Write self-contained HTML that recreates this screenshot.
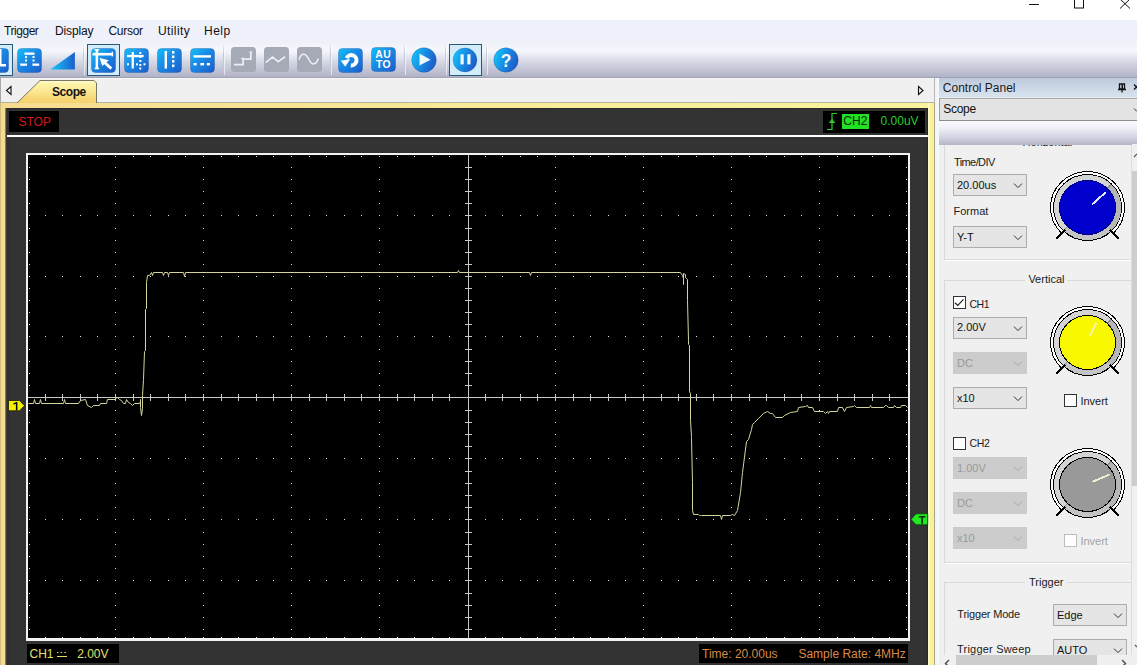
<!DOCTYPE html>
<html><head><meta charset="utf-8"><style>
html,body{margin:0;padding:0;background:#fff;}
#root{position:relative;width:1137px;height:665px;overflow:hidden;background:#f0f0f0;font-family:"Liberation Sans",sans-serif;}
.t{position:absolute;white-space:nowrap;font-family:"Liberation Sans",sans-serif;}
svg{position:absolute;overflow:visible;}
</style></head><body><div id="root">
<div style="position:absolute;left:0px;top:0px;width:1137px;height:20px;background:#ffffff"></div>
<svg style="left:0;top:0" width="1137" height="20"><line x1="1029" y1="4.5" x2="1039" y2="4.5" stroke="#111" stroke-width="1"/><rect x="1074.5" y="-3.5" width="9" height="11.5" fill="none" stroke="#111" stroke-width="1"/><line x1="1120" y1="-1" x2="1130" y2="8.5" stroke="#111" stroke-width="1"/><line x1="1130" y1="-1" x2="1120" y2="8.5" stroke="#111" stroke-width="1"/></svg>
<div style="position:absolute;left:0px;top:20px;width:1137px;height:22px;background:#eef0fa"></div>
<div class="t" style="left:4px;top:25.14px;font-size:12px;line-height:12px;color:#111;font-weight:normal;letter-spacing:-0.45px">Trigger</div>
<div class="t" style="left:55px;top:25.14px;font-size:12px;line-height:12px;color:#111;font-weight:normal;letter-spacing:-0.15px">Display</div>
<div class="t" style="left:108.5px;top:25.14px;font-size:12px;line-height:12px;color:#111;font-weight:normal;letter-spacing:-0.3px">Cursor</div>
<div class="t" style="left:158px;top:25.14px;font-size:12px;line-height:12px;color:#111;font-weight:normal;letter-spacing:0.4px">Utility</div>
<div class="t" style="left:204px;top:25.14px;font-size:12px;line-height:12px;color:#111;font-weight:normal;letter-spacing:0.5px">Help</div>
<div style="position:absolute;left:0px;top:42px;width:1137px;height:36px;background:linear-gradient(to bottom,#eff1f9 0px,#f3f5fb 5px,#f5f6fb 9px,#eceef6 12px,#d2d4e2 21px,#c0c2d3 29px,#b0b2c6 35px)"></div>
<div style="position:absolute;left:0px;top:77px;width:1137px;height:1px;background:#a0a2b2"></div>
<svg width="0" height="0" style="position:absolute">
<defs>
<linearGradient id="gb" x1="0" y1="0" x2="1" y2="1">
<stop offset="0" stop-color="#14c0f8"/><stop offset="0.45" stop-color="#1a8ae6"/><stop offset="1" stop-color="#1c5cc8"/></linearGradient>
<linearGradient id="gc" x1="0" y1="0.3" x2="1" y2="0.7">
<stop offset="0" stop-color="#10c4f8"/><stop offset="0.5" stop-color="#1a86e2"/><stop offset="1" stop-color="#1c58c4"/></linearGradient>
<linearGradient id="gt" x1="0" y1="0" x2="1" y2="0">
<stop offset="0" stop-color="#18c8f8"/><stop offset="1" stop-color="#1a60cc"/></linearGradient>
<linearGradient id="tabg" x1="0" y1="0" x2="0" y2="1">
<stop offset="0" stop-color="#fffbd8"/><stop offset="0.15" stop-color="#fdf3a8"/><stop offset="0.5" stop-color="#fce690"/><stop offset="0.75" stop-color="#f8d878"/><stop offset="1" stop-color="#f6d070"/></linearGradient>
</defs></svg>
<div style="position:absolute;left:-20px;top:44px;width:31px;height:30px;border:1px solid #2a5878;background:#d3ecfa"></div>
<svg style="left:-16px;top:48px" width="25" height="25" viewBox="0 0 25 25"><rect x="0.5" y="0.5" width="24" height="24" rx="4" ry="4" fill="url(#gb)" stroke="#1d4f9e" stroke-opacity="0.35"/><rect x="15" y="1" width="2.5" height="17" fill="#ffffff"/><rect x="15" y="16" width="7" height="2.5" fill="#ffffff"/></svg>
<svg style="left:16.5px;top:47.7px" width="25" height="25" viewBox="0 0 25 25"><rect x="0.5" y="0.5" width="24" height="24" rx="4" ry="4" fill="url(#gb)" stroke="#1d4f9e" stroke-opacity="0.35"/><rect x="7.5" y="4.5" width="10" height="2.3" fill="#ffffff"/><rect x="8" y="8" width="2" height="2" fill="#ffffff"/><rect x="8" y="11.5" width="2" height="2" fill="#ffffff"/><rect x="15.5" y="8" width="2" height="2" fill="#ffffff"/><rect x="15.5" y="11.5" width="2" height="2" fill="#ffffff"/><rect x="3.3" y="15.5" width="6.7" height="2.3" fill="#ffffff"/><rect x="15.4" y="15.5" width="6.8" height="2.3" fill="#ffffff"/></svg>
<svg style="left:50px;top:52px" width="25" height="18" viewBox="0 0 25 18"><polygon points="0.3,17.6 24.9,17.6 24.9,0.1" fill="url(#gt)"/></svg>
<div style="position:absolute;left:83px;top:45px;width:1px;height:30px;background:linear-gradient(to bottom,rgba(190,192,210,0.2),#c4c6d4 30%,#c4c6d4 70%,rgba(190,192,210,0.2))"></div>
<div style="position:absolute;left:84px;top:45px;width:1px;height:30px;background:rgba(255,255,255,0.6)"></div>
<div style="position:absolute;left:87px;top:44px;width:31px;height:30px;border:1px solid #2a5878;background:#d3ecfa"></div>
<svg style="left:91px;top:47.7px" width="25" height="25" viewBox="0 0 25 25"><rect x="0.5" y="0.5" width="24" height="24" rx="4" ry="4" fill="url(#gb)" stroke="#1d4f9e" stroke-opacity="0.35"/><rect x="4.6" y="1.3" width="2.5" height="19.8" fill="#ffffff"/><rect x="3.6" y="1" width="4.5" height="1.5" fill="#ffffff"/><rect x="3.6" y="19.6" width="4.5" height="1.6" fill="#ffffff"/><rect x="1.6" y="4.9" width="20.3" height="2.6" fill="#ffffff"/><rect x="20.6" y="3.8" width="1.5" height="4.6" fill="#ffffff"/><polygon points="8.6,9.9 17.8,12.3 11.3,18.1" fill="#ffffff"/><line x1="13" y1="14" x2="20.3" y2="20.6" stroke="#ffffff" stroke-width="2.8"/></svg>
<svg style="left:123.7px;top:47.9px" width="25" height="25" viewBox="0 0 25 25"><rect x="0.5" y="0.5" width="24" height="24" rx="4" ry="4" fill="url(#gb)" stroke="#1d4f9e" stroke-opacity="0.35"/><rect x="7.6" y="4" width="2.3" height="16.5" fill="#ffffff"/><rect x="3" y="6.9" width="16.6" height="2.3" fill="#ffffff"/><rect x="15.3" y="4" width="2" height="2" fill="#ffffff"/><rect x="15.3" y="8" width="2" height="2" fill="#ffffff"/><rect x="15.3" y="12" width="2" height="2" fill="#ffffff"/><rect x="15.3" y="16" width="2" height="2" fill="#ffffff"/><rect x="15.3" y="19.5" width="2" height="2" fill="#ffffff"/><rect x="3" y="15.3" width="2" height="2" fill="#ffffff"/><rect x="12" y="15.3" width="2" height="2" fill="#ffffff"/><rect x="19.5" y="15.3" width="2" height="2" fill="#ffffff"/></svg>
<svg style="left:157px;top:47.9px" width="25" height="25" viewBox="0 0 25 25"><rect x="0.5" y="0.5" width="24" height="24" rx="4" ry="4" fill="url(#gb)" stroke="#1d4f9e" stroke-opacity="0.35"/><rect x="7.6" y="3" width="2.4" height="17.6" fill="#ffffff"/><rect x="15" y="3" width="2.4" height="2.6" fill="#ffffff"/><rect x="15" y="7.5" width="2.4" height="2.6" fill="#ffffff"/><rect x="15" y="12" width="2.4" height="2.6" fill="#ffffff"/><rect x="15" y="16.5" width="2.4" height="2.6" fill="#ffffff"/></svg>
<svg style="left:189.8px;top:47.9px" width="25" height="25" viewBox="0 0 25 25"><rect x="0.5" y="0.5" width="24" height="24" rx="4" ry="4" fill="url(#gb)" stroke="#1d4f9e" stroke-opacity="0.35"/><rect x="3.5" y="7.2" width="17.5" height="2.4" fill="#ffffff"/><rect x="3.6" y="15" width="3.1" height="2.4" fill="#ffffff"/><rect x="10.4" y="15" width="3.7" height="2.4" fill="#ffffff"/><rect x="16.8" y="15" width="3.1" height="2.4" fill="#ffffff"/></svg>
<div style="position:absolute;left:223px;top:45px;width:1px;height:30px;background:linear-gradient(to bottom,rgba(190,192,210,0.2),#c4c6d4 30%,#c4c6d4 70%,rgba(190,192,210,0.2))"></div>
<div style="position:absolute;left:224px;top:45px;width:1px;height:30px;background:rgba(255,255,255,0.6)"></div>
<svg style="left:231px;top:47.4px" width="25" height="25" viewBox="0 0 25 25"><rect x="0" y="0" width="25" height="25" rx="3.5" ry="3.5" fill="#a6a9b6"/><polyline points="3,17.7 12.1,17.7 12.1,12.1 19.8,12.1 19.8,5" fill="none" stroke="#eceef4" stroke-width="1.8"/><line x1="18.3" y1="5.2" x2="21.3" y2="5.2" stroke="#eceef4" stroke-width="1.4"/><line x1="10" y1="12.1" x2="12.5" y2="10.5" stroke="#eceef4" stroke-width="1.2"/></svg>
<svg style="left:264.2px;top:47.4px" width="25" height="25" viewBox="0 0 25 25"><rect x="0" y="0" width="25" height="25" rx="3.5" ry="3.5" fill="#a6a9b6"/><polyline points="2.2,15.1 8.6,10 14.2,14.7 20.7,10" fill="none" stroke="#eceef4" stroke-width="1.6" stroke-linecap="round"/></svg>
<svg style="left:297.4px;top:47.4px" width="25" height="25" viewBox="0 0 25 25"><rect x="0" y="0" width="25" height="25" rx="3.5" ry="3.5" fill="#a6a9b6"/><path d="M2.2,12.1 C4.5,5.5 8.5,5.8 11.6,12 C14.5,18.5 19,18.5 21.1,12.1" fill="none" stroke="#eceef4" stroke-width="1.6" stroke-linecap="round"/></svg>
<div style="position:absolute;left:330px;top:45px;width:1px;height:30px;background:linear-gradient(to bottom,rgba(190,192,210,0.2),#c4c6d4 30%,#c4c6d4 70%,rgba(190,192,210,0.2))"></div>
<div style="position:absolute;left:331px;top:45px;width:1px;height:30px;background:rgba(255,255,255,0.6)"></div>
<svg style="left:338px;top:47.8px" width="25" height="25" viewBox="0 0 25 25"><rect x="0.5" y="0.5" width="24" height="24" rx="4" ry="4" fill="url(#gb)" stroke="#1d4f9e" stroke-opacity="0.35"/><path d="M8.59,10.10 A5.2,5.2 0 1 1 12.85,17.48" fill="none" stroke="#ffffff" stroke-width="4"/><polygon points="2.8,12.8 12.2,11 7.3,18.8" fill="#ffffff"/></svg>
<svg style="left:370.6px;top:47.4px" width="25" height="25" viewBox="0 0 25 25"><rect x="0.5" y="0.5" width="24" height="24" rx="4" ry="4" fill="url(#gb)" stroke="#1d4f9e" stroke-opacity="0.35"/><text x="12.2" y="10.9" text-anchor="middle" font-family="Liberation Sans" font-weight="bold" font-size="10.4" fill="#ffffff" letter-spacing="0.4">AU</text><text x="12.6" y="20.8" text-anchor="middle" font-family="Liberation Sans" font-weight="bold" font-size="10.4" fill="#ffffff" letter-spacing="0.4">TO</text></svg>
<div style="position:absolute;left:404px;top:45px;width:1px;height:30px;background:linear-gradient(to bottom,rgba(190,192,210,0.2),#c4c6d4 30%,#c4c6d4 70%,rgba(190,192,210,0.2))"></div>
<div style="position:absolute;left:405px;top:45px;width:1px;height:30px;background:rgba(255,255,255,0.6)"></div>
<svg style="left:411.2px;top:47.2px" width="26" height="26" viewBox="0 0 26 26"><circle cx="13" cy="13" r="12.3" fill="url(#gc)" stroke="#1d4f9e" stroke-opacity="0.4" stroke-width="0.8"/><polygon points="8.5,6.4 8.5,18.5 19.6,12.8" fill="#eef8ff"/></svg>
<div style="position:absolute;left:445px;top:45px;width:1px;height:30px;background:linear-gradient(to bottom,rgba(190,192,210,0.2),#c4c6d4 30%,#c4c6d4 70%,rgba(190,192,210,0.2))"></div>
<div style="position:absolute;left:446px;top:45px;width:1px;height:30px;background:rgba(255,255,255,0.6)"></div>
<div style="position:absolute;left:449px;top:44px;width:31px;height:30px;border:1px solid #2a5878;background:#d3ecfa"></div>
<svg style="left:451.9px;top:46.8px" width="26" height="26" viewBox="0 0 26 26"><circle cx="13" cy="13" r="11.9" fill="url(#gc)" stroke="#1d4f9e" stroke-opacity="0.4" stroke-width="0.8"/><rect x="8.5" y="7.3" width="3.2" height="10.1" fill="#eef8ff"/><rect x="15.3" y="7.3" width="3.2" height="10.1" fill="#eef8ff"/></svg>
<div style="position:absolute;left:486px;top:45px;width:1px;height:30px;background:linear-gradient(to bottom,rgba(190,192,210,0.2),#c4c6d4 30%,#c4c6d4 70%,rgba(190,192,210,0.2))"></div>
<div style="position:absolute;left:487px;top:45px;width:1px;height:30px;background:rgba(255,255,255,0.6)"></div>
<svg style="left:493.3px;top:47.4px" width="26" height="26" viewBox="0 0 26 26"><circle cx="13" cy="13" r="12.2" fill="url(#gc)" stroke="#1d4f9e" stroke-opacity="0.4" stroke-width="0.8"/><text x="13" y="19.6" text-anchor="middle" font-family="Liberation Sans" font-weight="bold" font-size="17.5" fill="#f4fbff">?</text></svg>
<div style="position:absolute;left:0px;top:78px;width:934px;height:25px;background:#f0f0f0"></div>
<div style="position:absolute;left:0px;top:78px;width:934px;height:1px;background:#f8f8f8"></div>
<div style="position:absolute;left:0px;top:78px;width:1px;height:25px;background:#a8a8a8"></div>
<div style="position:absolute;left:0px;top:102px;width:934px;height:1px;background:#b4b2a0"></div>
<div style="position:absolute;left:934px;top:78px;width:1px;height:25px;background:#b8b8b8"></div>
<svg style="left:0;top:78px" width="934" height="26"><polygon points="16.5,25.5 40,2.5 94,2.5 96.5,5 96.5,25.5" fill="url(#tabg)" stroke="#7a7660" stroke-width="1"/><polygon points="11,8.5 6.5,12.5 11,16.5" fill="none" stroke="#111" stroke-width="1.1"/><polygon points="918.5,8.5 923,12.5 918.5,16.5" fill="none" stroke="#111" stroke-width="1.1"/></svg>
<div class="t" style="left:52px;top:85.74px;font-size:12px;line-height:12px;color:#111;font-weight:bold;letter-spacing:-0.45px">Scope</div>
<div style="position:absolute;left:0px;top:103px;width:934px;height:562px;background:linear-gradient(to right,#b0a070 0px,#f5da8c 1px,#f6dc90 5px,#f8ee9c 600px,#f9f29e 928px,#fcfde8 929px,#f8f09a 930px,#f8f09a 934px)"></div>
<div style="position:absolute;left:934px;top:103px;width:1px;height:562px;background:#a8a888"></div>
<div style="position:absolute;left:5px;top:108px;width:923px;height:557px;background:#333333"></div>
<div style="position:absolute;left:5px;top:108px;width:1px;height:557px;background:#8a7c52"></div>
<div style="position:absolute;left:6px;top:108px;width:1px;height:557px;background:#3c3a32"></div>
<div style="position:absolute;left:7px;top:108px;width:3px;height:557px;background:#2f2f2f"></div>
<div style="position:absolute;left:7px;top:108px;width:921px;height:1px;background:#2a2a2a"></div>
<div style="position:absolute;left:927px;top:108px;width:1px;height:557px;background:#262626"></div>
<div style="position:absolute;left:9px;top:111px;width:50px;height:21px;background:#000"></div>
<div class="t" style="left:18.5px;top:115.54px;font-size:12px;line-height:12px;color:#d01818;font-weight:normal;">STOP</div>
<div style="position:absolute;left:823px;top:111px;width:102px;height:22px;background:#000"></div>
<div style="position:absolute;left:7px;top:135px;width:921px;height:2px;background:#ffffff"></div>
<div style="position:absolute;left:27px;top:644px;width:92px;height:19px;background:#000"></div>
<div style="position:absolute;left:699px;top:644px;width:209px;height:19px;background:#000"></div>
<div class="t" style="left:29.5px;top:647.54px;font-size:12px;line-height:12px;color:#e0e070;font-weight:normal;">CH1</div>
<div class="t" style="left:77.2px;top:647.54px;font-size:12px;line-height:12px;color:#e0e070;font-weight:normal;">2.00V</div>
<svg style="left:0;top:0" width="1137" height="665"><line x1="57" y1="656.5" x2="67" y2="656.5" stroke="#e0e070" stroke-width="1"/><line x1="57" y1="652.5" x2="67" y2="652.5" stroke="#e0e070" stroke-width="1" stroke-dasharray="1.5,2.2"/></svg>
<div class="t" style="left:702px;top:647.84px;font-size:12px;line-height:12px;color:#d88a48;font-weight:normal;">Time: 20.00us</div>
<div class="t" style="left:798.4px;top:647.84px;font-size:12px;line-height:12px;color:#d88a48;font-weight:normal;">Sample Rate: 4MHz</div>
<svg style="left:0;top:0" width="1137" height="665"><polyline points="827,129.5 832,129.5 832,113.5 837,113.5" fill="none" stroke="#30d030" stroke-width="1.2"/><polygon points="828.8,123 832,119 835.3,123" fill="#30d030"/></svg>
<div style="position:absolute;left:842px;top:114px;width:27px;height:15px;background:#22e022"></div>
<div class="t" style="left:843.3px;top:115.44px;font-size:12px;line-height:12px;color:#0a2a0a;font-weight:normal;">CH2</div>
<div class="t" style="left:880.6px;top:115.44px;font-size:12px;line-height:12px;color:#22d022;font-weight:normal;">0.00uV</div>
<svg style="left:0;top:0" width="1137" height="665" shape-rendering="crispEdges"><rect x="26" y="153" width="884" height="488" fill="#f2f2f2"/><rect x="28" y="155" width="880" height="483" fill="#000"/><path d="M29,167h1v1h-1zM29,179h1v1h-1zM29,191h1v1h-1zM29,203h1v1h-1zM29,215h1v1h-1zM29,228h1v1h-1zM29,240h1v1h-1zM29,252h1v1h-1zM29,264h1v1h-1zM29,276h1v1h-1zM29,288h1v1h-1zM29,300h1v1h-1zM29,312h1v1h-1zM29,324h1v1h-1zM29,336h1v1h-1zM29,349h1v1h-1zM29,361h1v1h-1zM29,373h1v1h-1zM29,385h1v1h-1zM29,397h1v1h-1zM29,410h1v1h-1zM29,422h1v1h-1zM29,434h1v1h-1zM29,446h1v1h-1zM29,458h1v1h-1zM29,471h1v1h-1zM29,483h1v1h-1zM29,495h1v1h-1zM29,507h1v1h-1zM29,519h1v1h-1zM29,532h1v1h-1zM29,544h1v1h-1zM29,556h1v1h-1zM29,568h1v1h-1zM29,580h1v1h-1zM29,593h1v1h-1zM29,605h1v1h-1zM29,617h1v1h-1zM29,629h1v1h-1zM45,156h1v1h-1zM45,215h1v1h-1zM45,276h1v1h-1zM45,336h1v1h-1zM45,458h1v1h-1zM45,519h1v1h-1zM45,580h1v1h-1zM45,637h1v1h-1zM62,156h1v1h-1zM62,215h1v1h-1zM62,276h1v1h-1zM62,336h1v1h-1zM62,458h1v1h-1zM62,519h1v1h-1zM62,580h1v1h-1zM62,637h1v1h-1zM80,156h1v1h-1zM80,215h1v1h-1zM80,276h1v1h-1zM80,336h1v1h-1zM80,458h1v1h-1zM80,519h1v1h-1zM80,580h1v1h-1zM80,637h1v1h-1zM97,156h1v1h-1zM97,215h1v1h-1zM97,276h1v1h-1zM97,336h1v1h-1zM97,458h1v1h-1zM97,519h1v1h-1zM97,580h1v1h-1zM97,637h1v1h-1zM115,156h1v1h-1zM115,167h1v1h-1zM115,179h1v1h-1zM115,191h1v1h-1zM115,203h1v1h-1zM115,215h1v1h-1zM115,228h1v1h-1zM115,240h1v1h-1zM115,252h1v1h-1zM115,264h1v1h-1zM115,276h1v1h-1zM115,288h1v1h-1zM115,300h1v1h-1zM115,312h1v1h-1zM115,324h1v1h-1zM115,336h1v1h-1zM115,349h1v1h-1zM115,361h1v1h-1zM115,373h1v1h-1zM115,385h1v1h-1zM115,397h1v1h-1zM115,410h1v1h-1zM115,422h1v1h-1zM115,434h1v1h-1zM115,446h1v1h-1zM115,458h1v1h-1zM115,471h1v1h-1zM115,483h1v1h-1zM115,495h1v1h-1zM115,507h1v1h-1zM115,519h1v1h-1zM115,532h1v1h-1zM115,544h1v1h-1zM115,556h1v1h-1zM115,568h1v1h-1zM115,580h1v1h-1zM115,593h1v1h-1zM115,605h1v1h-1zM115,617h1v1h-1zM115,629h1v1h-1zM115,637h1v1h-1zM133,156h1v1h-1zM133,215h1v1h-1zM133,276h1v1h-1zM133,336h1v1h-1zM133,458h1v1h-1zM133,519h1v1h-1zM133,580h1v1h-1zM133,637h1v1h-1zM150,156h1v1h-1zM150,215h1v1h-1zM150,276h1v1h-1zM150,336h1v1h-1zM150,458h1v1h-1zM150,519h1v1h-1zM150,580h1v1h-1zM150,637h1v1h-1zM168,156h1v1h-1zM168,215h1v1h-1zM168,276h1v1h-1zM168,336h1v1h-1zM168,458h1v1h-1zM168,519h1v1h-1zM168,580h1v1h-1zM168,637h1v1h-1zM185,156h1v1h-1zM185,215h1v1h-1zM185,276h1v1h-1zM185,336h1v1h-1zM185,458h1v1h-1zM185,519h1v1h-1zM185,580h1v1h-1zM185,637h1v1h-1zM203,156h1v1h-1zM203,167h1v1h-1zM203,179h1v1h-1zM203,191h1v1h-1zM203,203h1v1h-1zM203,215h1v1h-1zM203,228h1v1h-1zM203,240h1v1h-1zM203,252h1v1h-1zM203,264h1v1h-1zM203,276h1v1h-1zM203,288h1v1h-1zM203,300h1v1h-1zM203,312h1v1h-1zM203,324h1v1h-1zM203,336h1v1h-1zM203,349h1v1h-1zM203,361h1v1h-1zM203,373h1v1h-1zM203,385h1v1h-1zM203,397h1v1h-1zM203,410h1v1h-1zM203,422h1v1h-1zM203,434h1v1h-1zM203,446h1v1h-1zM203,458h1v1h-1zM203,471h1v1h-1zM203,483h1v1h-1zM203,495h1v1h-1zM203,507h1v1h-1zM203,519h1v1h-1zM203,532h1v1h-1zM203,544h1v1h-1zM203,556h1v1h-1zM203,568h1v1h-1zM203,580h1v1h-1zM203,593h1v1h-1zM203,605h1v1h-1zM203,617h1v1h-1zM203,629h1v1h-1zM203,637h1v1h-1zM221,156h1v1h-1zM221,215h1v1h-1zM221,276h1v1h-1zM221,336h1v1h-1zM221,458h1v1h-1zM221,519h1v1h-1zM221,580h1v1h-1zM221,637h1v1h-1zM238,156h1v1h-1zM238,215h1v1h-1zM238,276h1v1h-1zM238,336h1v1h-1zM238,458h1v1h-1zM238,519h1v1h-1zM238,580h1v1h-1zM238,637h1v1h-1zM256,156h1v1h-1zM256,215h1v1h-1zM256,276h1v1h-1zM256,336h1v1h-1zM256,458h1v1h-1zM256,519h1v1h-1zM256,580h1v1h-1zM256,637h1v1h-1zM273,156h1v1h-1zM273,215h1v1h-1zM273,276h1v1h-1zM273,336h1v1h-1zM273,458h1v1h-1zM273,519h1v1h-1zM273,580h1v1h-1zM273,637h1v1h-1zM291,156h1v1h-1zM291,167h1v1h-1zM291,179h1v1h-1zM291,191h1v1h-1zM291,203h1v1h-1zM291,215h1v1h-1zM291,228h1v1h-1zM291,240h1v1h-1zM291,252h1v1h-1zM291,264h1v1h-1zM291,276h1v1h-1zM291,288h1v1h-1zM291,300h1v1h-1zM291,312h1v1h-1zM291,324h1v1h-1zM291,336h1v1h-1zM291,349h1v1h-1zM291,361h1v1h-1zM291,373h1v1h-1zM291,385h1v1h-1zM291,397h1v1h-1zM291,410h1v1h-1zM291,422h1v1h-1zM291,434h1v1h-1zM291,446h1v1h-1zM291,458h1v1h-1zM291,471h1v1h-1zM291,483h1v1h-1zM291,495h1v1h-1zM291,507h1v1h-1zM291,519h1v1h-1zM291,532h1v1h-1zM291,544h1v1h-1zM291,556h1v1h-1zM291,568h1v1h-1zM291,580h1v1h-1zM291,593h1v1h-1zM291,605h1v1h-1zM291,617h1v1h-1zM291,629h1v1h-1zM291,637h1v1h-1zM309,156h1v1h-1zM309,215h1v1h-1zM309,276h1v1h-1zM309,336h1v1h-1zM309,458h1v1h-1zM309,519h1v1h-1zM309,580h1v1h-1zM309,637h1v1h-1zM326,156h1v1h-1zM326,215h1v1h-1zM326,276h1v1h-1zM326,336h1v1h-1zM326,458h1v1h-1zM326,519h1v1h-1zM326,580h1v1h-1zM326,637h1v1h-1zM344,156h1v1h-1zM344,215h1v1h-1zM344,276h1v1h-1zM344,336h1v1h-1zM344,458h1v1h-1zM344,519h1v1h-1zM344,580h1v1h-1zM344,637h1v1h-1zM361,156h1v1h-1zM361,215h1v1h-1zM361,276h1v1h-1zM361,336h1v1h-1zM361,458h1v1h-1zM361,519h1v1h-1zM361,580h1v1h-1zM361,637h1v1h-1zM379,156h1v1h-1zM379,167h1v1h-1zM379,179h1v1h-1zM379,191h1v1h-1zM379,203h1v1h-1zM379,215h1v1h-1zM379,228h1v1h-1zM379,240h1v1h-1zM379,252h1v1h-1zM379,264h1v1h-1zM379,276h1v1h-1zM379,288h1v1h-1zM379,300h1v1h-1zM379,312h1v1h-1zM379,324h1v1h-1zM379,336h1v1h-1zM379,349h1v1h-1zM379,361h1v1h-1zM379,373h1v1h-1zM379,385h1v1h-1zM379,397h1v1h-1zM379,410h1v1h-1zM379,422h1v1h-1zM379,434h1v1h-1zM379,446h1v1h-1zM379,458h1v1h-1zM379,471h1v1h-1zM379,483h1v1h-1zM379,495h1v1h-1zM379,507h1v1h-1zM379,519h1v1h-1zM379,532h1v1h-1zM379,544h1v1h-1zM379,556h1v1h-1zM379,568h1v1h-1zM379,580h1v1h-1zM379,593h1v1h-1zM379,605h1v1h-1zM379,617h1v1h-1zM379,629h1v1h-1zM379,637h1v1h-1zM397,156h1v1h-1zM397,215h1v1h-1zM397,276h1v1h-1zM397,336h1v1h-1zM397,458h1v1h-1zM397,519h1v1h-1zM397,580h1v1h-1zM397,637h1v1h-1zM414,156h1v1h-1zM414,215h1v1h-1zM414,276h1v1h-1zM414,336h1v1h-1zM414,458h1v1h-1zM414,519h1v1h-1zM414,580h1v1h-1zM414,637h1v1h-1zM432,156h1v1h-1zM432,215h1v1h-1zM432,276h1v1h-1zM432,336h1v1h-1zM432,458h1v1h-1zM432,519h1v1h-1zM432,580h1v1h-1zM432,637h1v1h-1zM449,156h1v1h-1zM449,215h1v1h-1zM449,276h1v1h-1zM449,336h1v1h-1zM449,458h1v1h-1zM449,519h1v1h-1zM449,580h1v1h-1zM449,637h1v1h-1zM468,156h1v1h-1zM468,215h1v1h-1zM468,276h1v1h-1zM468,336h1v1h-1zM468,458h1v1h-1zM468,519h1v1h-1zM468,580h1v1h-1zM468,637h1v1h-1zM485,156h1v1h-1zM485,215h1v1h-1zM485,276h1v1h-1zM485,336h1v1h-1zM485,458h1v1h-1zM485,519h1v1h-1zM485,580h1v1h-1zM485,637h1v1h-1zM502,156h1v1h-1zM502,215h1v1h-1zM502,276h1v1h-1zM502,336h1v1h-1zM502,458h1v1h-1zM502,519h1v1h-1zM502,580h1v1h-1zM502,637h1v1h-1zM520,156h1v1h-1zM520,215h1v1h-1zM520,276h1v1h-1zM520,336h1v1h-1zM520,458h1v1h-1zM520,519h1v1h-1zM520,580h1v1h-1zM520,637h1v1h-1zM537,156h1v1h-1zM537,215h1v1h-1zM537,276h1v1h-1zM537,336h1v1h-1zM537,458h1v1h-1zM537,519h1v1h-1zM537,580h1v1h-1zM537,637h1v1h-1zM555,156h1v1h-1zM555,167h1v1h-1zM555,179h1v1h-1zM555,191h1v1h-1zM555,203h1v1h-1zM555,215h1v1h-1zM555,228h1v1h-1zM555,240h1v1h-1zM555,252h1v1h-1zM555,264h1v1h-1zM555,276h1v1h-1zM555,288h1v1h-1zM555,300h1v1h-1zM555,312h1v1h-1zM555,324h1v1h-1zM555,336h1v1h-1zM555,349h1v1h-1zM555,361h1v1h-1zM555,373h1v1h-1zM555,385h1v1h-1zM555,397h1v1h-1zM555,410h1v1h-1zM555,422h1v1h-1zM555,434h1v1h-1zM555,446h1v1h-1zM555,458h1v1h-1zM555,471h1v1h-1zM555,483h1v1h-1zM555,495h1v1h-1zM555,507h1v1h-1zM555,519h1v1h-1zM555,532h1v1h-1zM555,544h1v1h-1zM555,556h1v1h-1zM555,568h1v1h-1zM555,580h1v1h-1zM555,593h1v1h-1zM555,605h1v1h-1zM555,617h1v1h-1zM555,629h1v1h-1zM555,637h1v1h-1zM573,156h1v1h-1zM573,215h1v1h-1zM573,276h1v1h-1zM573,336h1v1h-1zM573,458h1v1h-1zM573,519h1v1h-1zM573,580h1v1h-1zM573,637h1v1h-1zM590,156h1v1h-1zM590,215h1v1h-1zM590,276h1v1h-1zM590,336h1v1h-1zM590,458h1v1h-1zM590,519h1v1h-1zM590,580h1v1h-1zM590,637h1v1h-1zM608,156h1v1h-1zM608,215h1v1h-1zM608,276h1v1h-1zM608,336h1v1h-1zM608,458h1v1h-1zM608,519h1v1h-1zM608,580h1v1h-1zM608,637h1v1h-1zM625,156h1v1h-1zM625,215h1v1h-1zM625,276h1v1h-1zM625,336h1v1h-1zM625,458h1v1h-1zM625,519h1v1h-1zM625,580h1v1h-1zM625,637h1v1h-1zM643,156h1v1h-1zM643,167h1v1h-1zM643,179h1v1h-1zM643,191h1v1h-1zM643,203h1v1h-1zM643,215h1v1h-1zM643,228h1v1h-1zM643,240h1v1h-1zM643,252h1v1h-1zM643,264h1v1h-1zM643,276h1v1h-1zM643,288h1v1h-1zM643,300h1v1h-1zM643,312h1v1h-1zM643,324h1v1h-1zM643,336h1v1h-1zM643,349h1v1h-1zM643,361h1v1h-1zM643,373h1v1h-1zM643,385h1v1h-1zM643,397h1v1h-1zM643,410h1v1h-1zM643,422h1v1h-1zM643,434h1v1h-1zM643,446h1v1h-1zM643,458h1v1h-1zM643,471h1v1h-1zM643,483h1v1h-1zM643,495h1v1h-1zM643,507h1v1h-1zM643,519h1v1h-1zM643,532h1v1h-1zM643,544h1v1h-1zM643,556h1v1h-1zM643,568h1v1h-1zM643,580h1v1h-1zM643,593h1v1h-1zM643,605h1v1h-1zM643,617h1v1h-1zM643,629h1v1h-1zM643,637h1v1h-1zM661,156h1v1h-1zM661,215h1v1h-1zM661,276h1v1h-1zM661,336h1v1h-1zM661,458h1v1h-1zM661,519h1v1h-1zM661,580h1v1h-1zM661,637h1v1h-1zM678,156h1v1h-1zM678,215h1v1h-1zM678,276h1v1h-1zM678,336h1v1h-1zM678,458h1v1h-1zM678,519h1v1h-1zM678,580h1v1h-1zM678,637h1v1h-1zM696,156h1v1h-1zM696,215h1v1h-1zM696,276h1v1h-1zM696,336h1v1h-1zM696,458h1v1h-1zM696,519h1v1h-1zM696,580h1v1h-1zM696,637h1v1h-1zM713,156h1v1h-1zM713,215h1v1h-1zM713,276h1v1h-1zM713,336h1v1h-1zM713,458h1v1h-1zM713,519h1v1h-1zM713,580h1v1h-1zM713,637h1v1h-1zM731,156h1v1h-1zM731,167h1v1h-1zM731,179h1v1h-1zM731,191h1v1h-1zM731,203h1v1h-1zM731,215h1v1h-1zM731,228h1v1h-1zM731,240h1v1h-1zM731,252h1v1h-1zM731,264h1v1h-1zM731,276h1v1h-1zM731,288h1v1h-1zM731,300h1v1h-1zM731,312h1v1h-1zM731,324h1v1h-1zM731,336h1v1h-1zM731,349h1v1h-1zM731,361h1v1h-1zM731,373h1v1h-1zM731,385h1v1h-1zM731,397h1v1h-1zM731,410h1v1h-1zM731,422h1v1h-1zM731,434h1v1h-1zM731,446h1v1h-1zM731,458h1v1h-1zM731,471h1v1h-1zM731,483h1v1h-1zM731,495h1v1h-1zM731,507h1v1h-1zM731,519h1v1h-1zM731,532h1v1h-1zM731,544h1v1h-1zM731,556h1v1h-1zM731,568h1v1h-1zM731,580h1v1h-1zM731,593h1v1h-1zM731,605h1v1h-1zM731,617h1v1h-1zM731,629h1v1h-1zM731,637h1v1h-1zM749,156h1v1h-1zM749,215h1v1h-1zM749,276h1v1h-1zM749,336h1v1h-1zM749,458h1v1h-1zM749,519h1v1h-1zM749,580h1v1h-1zM749,637h1v1h-1zM766,156h1v1h-1zM766,215h1v1h-1zM766,276h1v1h-1zM766,336h1v1h-1zM766,458h1v1h-1zM766,519h1v1h-1zM766,580h1v1h-1zM766,637h1v1h-1zM784,156h1v1h-1zM784,215h1v1h-1zM784,276h1v1h-1zM784,336h1v1h-1zM784,458h1v1h-1zM784,519h1v1h-1zM784,580h1v1h-1zM784,637h1v1h-1zM801,156h1v1h-1zM801,215h1v1h-1zM801,276h1v1h-1zM801,336h1v1h-1zM801,458h1v1h-1zM801,519h1v1h-1zM801,580h1v1h-1zM801,637h1v1h-1zM819,156h1v1h-1zM819,167h1v1h-1zM819,179h1v1h-1zM819,191h1v1h-1zM819,203h1v1h-1zM819,215h1v1h-1zM819,228h1v1h-1zM819,240h1v1h-1zM819,252h1v1h-1zM819,264h1v1h-1zM819,276h1v1h-1zM819,288h1v1h-1zM819,300h1v1h-1zM819,312h1v1h-1zM819,324h1v1h-1zM819,336h1v1h-1zM819,349h1v1h-1zM819,361h1v1h-1zM819,373h1v1h-1zM819,385h1v1h-1zM819,397h1v1h-1zM819,410h1v1h-1zM819,422h1v1h-1zM819,434h1v1h-1zM819,446h1v1h-1zM819,458h1v1h-1zM819,471h1v1h-1zM819,483h1v1h-1zM819,495h1v1h-1zM819,507h1v1h-1zM819,519h1v1h-1zM819,532h1v1h-1zM819,544h1v1h-1zM819,556h1v1h-1zM819,568h1v1h-1zM819,580h1v1h-1zM819,593h1v1h-1zM819,605h1v1h-1zM819,617h1v1h-1zM819,629h1v1h-1zM819,637h1v1h-1zM837,156h1v1h-1zM837,215h1v1h-1zM837,276h1v1h-1zM837,336h1v1h-1zM837,458h1v1h-1zM837,519h1v1h-1zM837,580h1v1h-1zM837,637h1v1h-1zM854,156h1v1h-1zM854,215h1v1h-1zM854,276h1v1h-1zM854,336h1v1h-1zM854,458h1v1h-1zM854,519h1v1h-1zM854,580h1v1h-1zM854,637h1v1h-1zM872,156h1v1h-1zM872,215h1v1h-1zM872,276h1v1h-1zM872,336h1v1h-1zM872,458h1v1h-1zM872,519h1v1h-1zM872,580h1v1h-1zM872,637h1v1h-1zM889,156h1v1h-1zM889,215h1v1h-1zM889,276h1v1h-1zM889,336h1v1h-1zM889,458h1v1h-1zM889,519h1v1h-1zM889,580h1v1h-1zM889,637h1v1h-1zM906,167h1v1h-1zM906,179h1v1h-1zM906,191h1v1h-1zM906,203h1v1h-1zM906,215h1v1h-1zM906,228h1v1h-1zM906,240h1v1h-1zM906,252h1v1h-1zM906,264h1v1h-1zM906,276h1v1h-1zM906,288h1v1h-1zM906,300h1v1h-1zM906,312h1v1h-1zM906,324h1v1h-1zM906,336h1v1h-1zM906,349h1v1h-1zM906,361h1v1h-1zM906,373h1v1h-1zM906,385h1v1h-1zM906,397h1v1h-1zM906,410h1v1h-1zM906,422h1v1h-1zM906,434h1v1h-1zM906,446h1v1h-1zM906,458h1v1h-1zM906,471h1v1h-1zM906,483h1v1h-1zM906,495h1v1h-1zM906,507h1v1h-1zM906,519h1v1h-1zM906,532h1v1h-1zM906,544h1v1h-1zM906,556h1v1h-1zM906,568h1v1h-1zM906,580h1v1h-1zM906,593h1v1h-1zM906,605h1v1h-1zM906,617h1v1h-1zM906,629h1v1h-1z" fill="#e6e6e6"/><rect x="28" y="397" width="880" height="1" fill="#c8c8c8"/><rect x="468" y="155" width="1" height="483" fill="#c8c8c8"/><path d="M45,394h1v7h-1zM62,394h1v7h-1zM80,394h1v7h-1zM97,394h1v7h-1zM115,394h1v7h-1zM133,394h1v7h-1zM150,394h1v7h-1zM168,394h1v7h-1zM185,394h1v7h-1zM203,394h1v7h-1zM221,394h1v7h-1zM238,394h1v7h-1zM256,394h1v7h-1zM273,394h1v7h-1zM291,394h1v7h-1zM309,394h1v7h-1zM326,394h1v7h-1zM344,394h1v7h-1zM361,394h1v7h-1zM379,394h1v7h-1zM397,394h1v7h-1zM414,394h1v7h-1zM432,394h1v7h-1zM449,394h1v7h-1zM485,394h1v7h-1zM502,394h1v7h-1zM520,394h1v7h-1zM537,394h1v7h-1zM555,394h1v7h-1zM573,394h1v7h-1zM590,394h1v7h-1zM608,394h1v7h-1zM625,394h1v7h-1zM643,394h1v7h-1zM661,394h1v7h-1zM678,394h1v7h-1zM696,394h1v7h-1zM713,394h1v7h-1zM731,394h1v7h-1zM749,394h1v7h-1zM766,394h1v7h-1zM784,394h1v7h-1zM801,394h1v7h-1zM819,394h1v7h-1zM837,394h1v7h-1zM854,394h1v7h-1zM872,394h1v7h-1zM889,394h1v7h-1zM465,167h7v1h-7zM465,179h7v1h-7zM465,191h7v1h-7zM465,203h7v1h-7zM465,215h7v1h-7zM465,228h7v1h-7zM465,240h7v1h-7zM465,252h7v1h-7zM465,264h7v1h-7zM465,276h7v1h-7zM465,288h7v1h-7zM465,300h7v1h-7zM465,312h7v1h-7zM465,324h7v1h-7zM465,336h7v1h-7zM465,349h7v1h-7zM465,361h7v1h-7zM465,373h7v1h-7zM465,385h7v1h-7zM465,410h7v1h-7zM465,422h7v1h-7zM465,434h7v1h-7zM465,446h7v1h-7zM465,458h7v1h-7zM465,471h7v1h-7zM465,483h7v1h-7zM465,495h7v1h-7zM465,507h7v1h-7zM465,519h7v1h-7zM465,532h7v1h-7zM465,544h7v1h-7zM465,556h7v1h-7zM465,568h7v1h-7zM465,580h7v1h-7zM465,593h7v1h-7zM465,605h7v1h-7zM465,617h7v1h-7zM465,629h7v1h-7z" fill="#c8c8c8"/></svg>
<svg style="left:0;top:0" width="1137" height="665"><polyline points="28.5,403.5 33.5,403.5 34.5,399.5 35.5,403.5 39.5,403.5 40.5,399.5 41.5,403.5 63.5,403.5 64.5,399.5 65.5,403.5 78.5,403.5 80.5,400.5 85.5,399.5 87.5,405.5 91.5,407.5 93.5,405.5 99.5,405.5 100.5,403.5 106.5,403.5 107.5,399.5 115.5,399.5 116.5,397.5 117.5,397.5 119.5,399.5 121.5,400.5 123.5,403.5 125.5,403.5 126.5,399.5 128.5,402.5 130.5,403.5 132.5,405.5 134.5,403.5 139.5,403.5 140.5,401.5 140.5,399.5 140.5,407.5 141.5,415.5 142.5,408.5 142.5,395.5 143.5,379.5 144.5,351.5 145.5,350.5 145.5,309.5 146.5,308.5 146.5,282.5 147.5,275.5 149.5,275.5 151.5,272.5 152.5,275.5 153.5,272.5 162.5,272.5 163.5,275.5 164.5,272.5 167.5,272.5 168.5,275.5 169.5,272.5 183.5,272.5 184.5,276.5 185.5,272.5 457.5,272.5 458.5,270.5 459.5,272.5 529.5,272.5 530.5,275.5 531.5,272.5 680.5,272.5 682.5,275.5 683.5,278.5 683.5,284.5 683.5,273.5 685.5,274.5 685.5,277.5 687.5,279.5 687.5,300.5 688.5,340.5 688.5,344.5 689.5,345.5 689.5,391.5 690.5,393.5 690.5,420.5 691.5,436.5 691.5,438.5 692.5,482.5 692.5,510.5 693.5,514.5 698.5,514.5 699.5,515.5 700.5,515.5 701.5,515.5 720.5,515.5 721.5,519.5 722.5,515.5 730.5,515.5 732.5,514.5 734.5,515.5 737.5,510.5 740.5,492.5 742.5,472.5 746.5,441.5 748.5,439.5 751.5,429.5 752.5,424.5 754.5,422.5 758.5,418.5 763.5,413.5 767.5,411.5 770.5,413.5 772.5,413.5 775.5,417.5 782.5,417.5 784.5,415.5 790.5,412.5 797.5,411.5 798.5,407.5 805.5,406.5 807.5,405.5 808.5,407.5 812.5,407.5 814.5,411.5 823.5,411.5 825.5,413.5 827.5,411.5 828.5,413.5 829.5,411.5 837.5,411.5 838.5,407.5 842.5,407.5 844.5,411.5 846.5,407.5 853.5,406.5 854.5,405.5 856.5,407.5 869.5,407.5 870.5,405.5 871.5,407.5 883.5,407.5 885.5,405.5 886.5,405.5 888.5,407.5 893.5,407.5 894.5,405.5 896.5,407.5 900.5,407.5 901.5,405.5 905.5,405.5 907.5,407.5" fill="none" stroke="#d4d49c" stroke-width="1" stroke-linejoin="round"/></svg>
<svg style="left:0;top:0" width="1137" height="665"><polygon points="8.5,400.5 19.5,400.5 24.5,405.7 19.5,410.8 8.5,410.8" fill="#f2f200" stroke="#1a1a00" stroke-width="0.8"/><path d="M13.3,403.4 L16.2,402 L17.4,402 L17.4,410.3 L15.9,410.3 L15.9,404 L13.3,404.6 Z" fill="#000"/><polygon points="927.7,513.8 916,513.8 911,519.4 916,524.8 927.7,524.8" fill="#22e822" stroke="#0a400a" stroke-width="0.8"/><path d="M918.8,516 h6.6 v1.6 h-2.5 v6.2 h-1.6 v-6.2 h-2.5 z" fill="#063006"/></svg>
<div style="position:absolute;left:935px;top:78px;width:4px;height:587px;background:linear-gradient(to right,#eef2f6,#f8f9fb)"></div>
<div style="position:absolute;left:934px;top:103px;width:1px;height:562px;background:#a8a888"></div>
<div style="position:absolute;left:939px;top:78px;width:198px;height:20px;background:linear-gradient(to bottom,#bcc9da,#c9d5e3 40%,#d8e3ee 95%,#eaf0f8 100%)"></div>
<div class="t" style="left:942.8px;top:81.74px;font-size:12px;line-height:12px;color:#1a1a1a;font-weight:normal;">Control Panel</div>
<svg style="left:0;top:0" width="1137" height="665"><path d="M1119.5,84 h5 v5 h-5 z M1118,89.5 h8 M1122,89.5 v3" fill="none" stroke="#111" stroke-width="1.3"/><rect x="1121.5" y="84.5" width="1.5" height="4.5" fill="#111"/><path d="M1134,84.5 l5,5 M1139,84.5 l-5,5" stroke="#111" stroke-width="1.3"/></svg>
<div style="position:absolute;left:939px;top:98px;width:198px;height:23px;background:#e3e3e3;border-top:1px solid #a9a9a9;border-bottom:1px solid #8c8c8c;border-left:1px solid #a0a0a0;box-sizing:border-box"></div>
<div class="t" style="left:943.3px;top:103.24px;font-size:12px;line-height:12px;color:#111;font-weight:normal;letter-spacing:-0.3px">Scope</div>
<svg style="left:0;top:0" width="1137" height="665"><path d="M1134,108.5 l3,3" stroke="#333" stroke-width="1"/></svg>
<div style="position:absolute;left:944px;top:144px;width:1px;height:116px;background:#d9d9d9"></div>
<div style="position:absolute;left:944px;top:259px;width:187px;height:1px;background:#d9d9d9"></div>
<div style="position:absolute;left:945px;top:260px;width:186px;height:1px;background:#ffffff"></div>
<div class="t" style="left:1022.6px;top:136.69px;font-size:11px;line-height:11px;color:#1a1a1a;font-weight:normal;">Horizontal</div>
<div style="position:absolute;left:944px;top:280px;width:1px;height:283px;background:#d9d9d9"></div>
<div style="position:absolute;left:944px;top:280px;width:81px;height:1px;background:#d9d9d9"></div>
<div style="position:absolute;left:1067px;top:280px;width:64px;height:1px;background:#d9d9d9"></div>
<div style="position:absolute;left:944px;top:562px;width:187px;height:1px;background:#d9d9d9"></div>
<div style="position:absolute;left:945px;top:563px;width:186px;height:1px;background:#ffffff"></div>
<div class="t" style="left:1028.4px;top:273.69px;font-size:11px;line-height:11px;color:#1a1a1a;font-weight:normal;">Vertical</div>
<div style="position:absolute;left:944px;top:582px;width:1px;height:73px;background:#d9d9d9"></div>
<div style="position:absolute;left:944px;top:582px;width:81px;height:1px;background:#d9d9d9"></div>
<div style="position:absolute;left:1067px;top:582px;width:64px;height:1px;background:#d9d9d9"></div>
<div class="t" style="left:1029px;top:577.19px;font-size:11px;line-height:11px;color:#1a1a1a;font-weight:normal;">Trigger</div>
<div style="position:absolute;left:1131px;top:144px;width:1px;height:511px;background:#dcdcdc"></div>
<div style="position:absolute;left:939px;top:121px;width:198px;height:24px;background:linear-gradient(to bottom,#fafafd 0%,#efeff7 30%,#d0d2e0 70%,#b4b6c9 100%)"></div>
<div class="t" style="left:954px;top:156.89px;font-size:11px;line-height:11px;color:#1a1a1a;font-weight:normal;letter-spacing:-0.6px">Time/DIV</div>
<div style="position:absolute;left:953px;top:174px;width:74px;height:22px;background:#e5e5e5;box-sizing:border-box;border:1px solid #adadad"></div>
<div class="t" style="left:957px;top:179.89px;font-size:11px;line-height:11px;color:#111;font-weight:normal;">20.00us</div>
<svg style="left:0;top:0" width="1137" height="665"><polyline points="1014,183.6 1018,187.6 1022,183.6" fill="none" stroke="#333" stroke-width="1"/></svg>
<div class="t" style="left:953.5px;top:206.49px;font-size:11px;line-height:11px;color:#1a1a1a;font-weight:normal;">Format</div>
<div style="position:absolute;left:953px;top:226px;width:74px;height:22px;background:#e5e5e5;box-sizing:border-box;border:1px solid #adadad"></div>
<div class="t" style="left:957px;top:231.89px;font-size:11px;line-height:11px;color:#111;font-weight:normal;">Y-T</div>
<svg style="left:0;top:0" width="1137" height="665"><polyline points="1014,235.6 1018,239.6 1022,235.6" fill="none" stroke="#333" stroke-width="1"/></svg>
<div style="position:absolute;left:953px;top:296px;width:13px;height:13px;box-sizing:border-box;border:1px solid #333333;background:#fff"></div>
<svg style="left:953px;top:296px" width="13" height="13"><polyline points="2,6.8 4.8,9.4 10.5,3.4" fill="none" stroke="#222" stroke-width="1.2"/></svg>
<div class="t" style="left:969.5px;top:298.71px;font-size:10.5px;line-height:10.5px;color:#1a1a1a;font-weight:normal;letter-spacing:-0.5px">CH1</div>
<div style="position:absolute;left:953px;top:317px;width:74px;height:22px;background:#e5e5e5;box-sizing:border-box;border:1px solid #adadad"></div>
<div class="t" style="left:957px;top:322.29px;font-size:11px;line-height:11px;color:#111;font-weight:normal;">2.00V</div>
<svg style="left:0;top:0" width="1137" height="665"><polyline points="1014,326.6 1018,330.6 1022,326.6" fill="none" stroke="#333" stroke-width="1"/></svg>
<div style="position:absolute;left:953px;top:352px;width:74px;height:22px;background:#cccccc;box-sizing:border-box;border:1px solid #cbcbcb"></div>
<div class="t" style="left:957px;top:357.89px;font-size:11px;line-height:11px;color:#9a9a9a;font-weight:normal;">DC</div>
<svg style="left:0;top:0" width="1137" height="665"><polyline points="1014,361.6 1018,365.6 1022,361.6" fill="none" stroke="#a8a8a8" stroke-width="1"/></svg>
<div style="position:absolute;left:953px;top:387px;width:74px;height:22px;background:#e5e5e5;box-sizing:border-box;border:1px solid #adadad"></div>
<div class="t" style="left:957px;top:392.69px;font-size:11px;line-height:11px;color:#111;font-weight:normal;">x10</div>
<svg style="left:0;top:0" width="1137" height="665"><polyline points="1014,396.6 1018,400.6 1022,396.6" fill="none" stroke="#333" stroke-width="1"/></svg>
<div style="position:absolute;left:1064px;top:394px;width:13px;height:13px;box-sizing:border-box;border:1px solid #333333;background:#fff"></div>
<div class="t" style="left:1080.4px;top:396.19px;font-size:11px;line-height:11px;color:#1a1a1a;font-weight:normal;">Invert</div>
<div style="position:absolute;left:953px;top:436.5px;width:13px;height:13px;box-sizing:border-box;border:1px solid #333333;background:#fff"></div>
<div class="t" style="left:969.5px;top:438.31px;font-size:10.5px;line-height:10.5px;color:#1a1a1a;font-weight:normal;letter-spacing:-0.3px">CH2</div>
<div style="position:absolute;left:953px;top:457px;width:74px;height:22px;background:#cccccc;box-sizing:border-box;border:1px solid #cbcbcb"></div>
<div class="t" style="left:957px;top:462.69px;font-size:11px;line-height:11px;color:#9a9a9a;font-weight:normal;">1.00V</div>
<svg style="left:0;top:0" width="1137" height="665"><polyline points="1014,466.6 1018,470.6 1022,466.6" fill="none" stroke="#a8a8a8" stroke-width="1"/></svg>
<div style="position:absolute;left:953px;top:492px;width:74px;height:22px;background:#cccccc;box-sizing:border-box;border:1px solid #cbcbcb"></div>
<div class="t" style="left:957px;top:497.89px;font-size:11px;line-height:11px;color:#9a9a9a;font-weight:normal;">DC</div>
<svg style="left:0;top:0" width="1137" height="665"><polyline points="1014,501.6 1018,505.6 1022,501.6" fill="none" stroke="#a8a8a8" stroke-width="1"/></svg>
<div style="position:absolute;left:953px;top:527px;width:74px;height:22px;background:#cccccc;box-sizing:border-box;border:1px solid #cbcbcb"></div>
<div class="t" style="left:957px;top:532.69px;font-size:11px;line-height:11px;color:#9a9a9a;font-weight:normal;">x10</div>
<svg style="left:0;top:0" width="1137" height="665"><polyline points="1014,536.6 1018,540.6 1022,536.6" fill="none" stroke="#a8a8a8" stroke-width="1"/></svg>
<div style="position:absolute;left:1064px;top:534px;width:13px;height:13px;box-sizing:border-box;border:1px solid #bcbcbc;background:#fff"></div>
<div class="t" style="left:1080.4px;top:536.19px;font-size:11px;line-height:11px;color:#a3a3a3;font-weight:normal;">Invert</div>
<div class="t" style="left:957.3px;top:608.99px;font-size:11px;line-height:11px;color:#1a1a1a;font-weight:normal;letter-spacing:-0.2px">Trigger Mode</div>
<div style="position:absolute;left:1053px;top:604px;width:74px;height:22px;background:#e5e5e5;box-sizing:border-box;border:1px solid #adadad"></div>
<div class="t" style="left:1057px;top:609.69px;font-size:11px;line-height:11px;color:#111;font-weight:normal;">Edge</div>
<svg style="left:0;top:0" width="1137" height="665"><polyline points="1114,613.6 1118,617.6 1122,613.6" fill="none" stroke="#333" stroke-width="1"/></svg>
<div class="t" style="left:957.1px;top:643.69px;font-size:11px;line-height:11px;color:#1a1a1a;font-weight:normal;letter-spacing:0.2px">Trigger Sweep</div>
<div style="position:absolute;left:1053px;top:639px;width:74px;height:22px;background:#e5e5e5;box-sizing:border-box;border:1px solid #adadad"></div>
<div class="t" style="left:1057px;top:644.69px;font-size:11px;line-height:11px;color:#111;font-weight:normal;">AUTO</div>
<svg style="left:0;top:0" width="1137" height="665"><polyline points="1114,648.6 1118,652.6 1122,648.6" fill="none" stroke="#333" stroke-width="1"/></svg>
<svg style="left:1037px;top:157px" width="100" height="100" viewBox="-50.5 -50.5 100 100" shape-rendering="crispEdges"><path d="M-25.10,24.40 A35.5,34.5 0 1 1 25.10,24.40" fill="none" stroke="#ffffff" stroke-width="2.2"/><path d="M-26.16,25.46 A37,36 0 1 1 26.16,25.46" fill="none" stroke="#000" stroke-width="1"/><ellipse cx="0" cy="0" rx="34" ry="33" fill="#c4c4c4" stroke="#000" stroke-width="1"/><path d="M-21.92,21.21 A31,30 0 0 1 21.92,-21.21" fill="none" stroke="#d4d4d4" stroke-width="5.5"/><path d="M21.92,-21.21 A31,30 0 0 1 21.92,21.21" fill="none" stroke="#b6b6b6" stroke-width="5.5"/><line x1="-19.80" y1="19.09" x2="-23.69" y2="22.98" stroke="#8a8a8a" stroke-width="1"/><line x1="19.80" y1="-19.09" x2="23.69" y2="-22.98" stroke="#8a8a8a" stroke-width="1"/><ellipse cx="0" cy="0" rx="28" ry="27" fill="#0000cc" stroke="#00007a" stroke-width="1"/><line x1="-22.27" y1="22.27" x2="-31.11" y2="31.11" stroke="#000" stroke-width="1.6"/><line x1="22.27" y1="22.27" x2="31.11" y2="31.11" stroke="#000" stroke-width="1.6"/><line x1="5" y1="-3.5" x2="17.6" y2="-14.6" stroke="#dde4ff" stroke-width="2" stroke-linecap="round"/></svg>
<svg style="left:1037px;top:292px" width="100" height="100" viewBox="-50.5 -50.5 100 100" shape-rendering="crispEdges"><path d="M-25.10,24.40 A35.5,34.5 0 1 1 25.10,24.40" fill="none" stroke="#ffffff" stroke-width="2.2"/><path d="M-26.16,25.46 A37,36 0 1 1 26.16,25.46" fill="none" stroke="#000" stroke-width="1"/><ellipse cx="0" cy="0" rx="34" ry="33" fill="#c4c4c4" stroke="#000" stroke-width="1"/><path d="M-21.92,21.21 A31,30 0 0 1 21.92,-21.21" fill="none" stroke="#d4d4d4" stroke-width="5.5"/><path d="M21.92,-21.21 A31,30 0 0 1 21.92,21.21" fill="none" stroke="#b6b6b6" stroke-width="5.5"/><line x1="-19.80" y1="19.09" x2="-23.69" y2="22.98" stroke="#8a8a8a" stroke-width="1"/><line x1="19.80" y1="-19.09" x2="23.69" y2="-22.98" stroke="#8a8a8a" stroke-width="1"/><ellipse cx="0" cy="0" rx="28" ry="27" fill="#f8f800" stroke="#000" stroke-width="1"/><line x1="-22.27" y1="22.27" x2="-31.11" y2="31.11" stroke="#000" stroke-width="1.6"/><line x1="22.27" y1="22.27" x2="31.11" y2="31.11" stroke="#000" stroke-width="1.6"/><line x1="2.5" y1="-7" x2="8.5" y2="-19.1" stroke="#f4f4a0" stroke-width="2" stroke-linecap="round"/></svg>
<svg style="left:1037px;top:434px" width="100" height="100" viewBox="-50.5 -50.5 100 100" shape-rendering="crispEdges"><path d="M-25.10,24.40 A35.5,34.5 0 1 1 25.10,24.40" fill="none" stroke="#ffffff" stroke-width="2.2"/><path d="M-26.16,25.46 A37,36 0 1 1 26.16,25.46" fill="none" stroke="#000" stroke-width="1"/><ellipse cx="0" cy="0" rx="34" ry="33" fill="#c4c4c4" stroke="#000" stroke-width="1"/><path d="M-21.92,21.21 A31,30 0 0 1 21.92,-21.21" fill="none" stroke="#d4d4d4" stroke-width="5.5"/><path d="M21.92,-21.21 A31,30 0 0 1 21.92,21.21" fill="none" stroke="#b6b6b6" stroke-width="5.5"/><line x1="-19.80" y1="19.09" x2="-23.69" y2="22.98" stroke="#8a8a8a" stroke-width="1"/><line x1="19.80" y1="-19.09" x2="23.69" y2="-22.98" stroke="#8a8a8a" stroke-width="1"/><ellipse cx="0" cy="0" rx="28" ry="27" fill="#999999" stroke="#000" stroke-width="1"/><line x1="-22.27" y1="22.27" x2="-31.11" y2="31.11" stroke="#000" stroke-width="1.6"/><line x1="22.27" y1="22.27" x2="31.11" y2="31.11" stroke="#000" stroke-width="1.6"/><line x1="5.5" y1="-3" x2="21.2" y2="-9.6" stroke="#eeeed0" stroke-width="2" stroke-linecap="round"/></svg>
<div style="position:absolute;left:1132px;top:144px;width:5px;height:511px;background:#f0f0f0"></div>
<div style="position:absolute;left:1132px;top:170.5px;width:5px;height:315px;background:#cdcdcd"></div>
<svg style="left:0;top:0" width="1137" height="665"><path d="M1134,157 l3,-3" stroke="#555" stroke-width="1.2"/><path d="M1135,645 l2,2" stroke="#555" stroke-width="1.2"/></svg>
<div style="position:absolute;left:939px;top:655px;width:198px;height:10px;background:#f0f0f0"></div>
<div style="position:absolute;left:956px;top:655px;width:141px;height:10px;background:#cdcdcd"></div>
<svg style="left:0;top:0" width="1137" height="665"><polyline points="949,660 945.5,663.5 949,667" fill="none" stroke="#555" stroke-width="1.5"/><polyline points="1122,660 1125.5,663.5 1122,667" fill="none" stroke="#555" stroke-width="1.5"/></svg>
</div></body></html>
